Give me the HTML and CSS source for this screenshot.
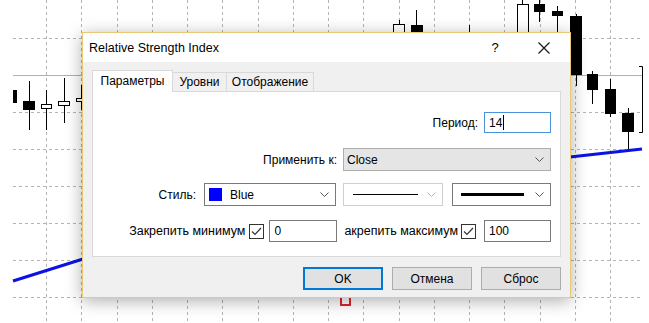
FILE: index.html
```html
<!DOCTYPE html>
<html lang="ru">
<head>
    <meta charset="UTF-8">
    <title>Relative Strength Index</title>
    <link rel="stylesheet" href="styles.css">
</head>
<body>
<div class="screen">
    <svg class="chart" width="649" height="323" viewBox="0 0 649 323">
        <g class="grid">
            <line x1="46.5" y1="0" x2="46.5" y2="323"/>
            <line x1="81.5" y1="0" x2="81.5" y2="323"/>
            <line x1="117.5" y1="0" x2="117.5" y2="323"/>
            <line x1="152.5" y1="0" x2="152.5" y2="323"/>
            <line x1="187.5" y1="0" x2="187.5" y2="323"/>
            <line x1="222.5" y1="0" x2="222.5" y2="323"/>
            <line x1="258.5" y1="0" x2="258.5" y2="323"/>
            <line x1="293.5" y1="0" x2="293.5" y2="323"/>
            <line x1="328.5" y1="0" x2="328.5" y2="323"/>
            <line x1="363.5" y1="0" x2="363.5" y2="323"/>
            <line x1="399.5" y1="0" x2="399.5" y2="323"/>
            <line x1="434.5" y1="0" x2="434.5" y2="323"/>
            <line x1="469.5" y1="0" x2="469.5" y2="323"/>
            <line x1="504.5" y1="0" x2="504.5" y2="323"/>
            <line x1="540.5" y1="0" x2="540.5" y2="323"/>
            <line x1="575.5" y1="0" x2="575.5" y2="323"/>
            <line x1="610.5" y1="0" x2="610.5" y2="323"/>
            <line x1="13" y1="38.5" x2="642" y2="38.5"/>
            <line x1="13" y1="112.5" x2="642" y2="112.5"/>
            <line x1="13" y1="149.5" x2="642" y2="149.5"/>
            <line x1="13" y1="186.5" x2="642" y2="186.5"/>
            <line x1="13" y1="223.5" x2="642" y2="223.5"/>
            <line x1="13" y1="260.5" x2="642" y2="260.5"/>
            <line x1="13" y1="297.5" x2="642" y2="297.5"/>
        </g>
        <line class="level" x1="13" y1="75.5" x2="642" y2="75.5"/>
        <path class="bracket" d="M639 66.5H642.5V132.5H639"/>

        <!-- свечи -->
        <g class="candles">
            <rect class="bear" x="13.5" y="90.5" width="3" height="12"/>
            <line x1="29.5" y1="81" x2="29.5" y2="130"/>
            <rect class="bear" x="23.5" y="101.5" width="11" height="8"/>
            <line x1="46.5" y1="90" x2="46.5" y2="130"/>
            <rect class="bull" x="41.5" y="104.5" width="10" height="4"/>
            <line x1="64.5" y1="78" x2="64.5" y2="123"/>
            <rect class="bull" x="58.5" y="101.5" width="11" height="4"/>
            <line x1="81.5" y1="85" x2="81.5" y2="110"/>
            <rect class="bull" x="76.5" y="98.5" width="11" height="3"/>

            <line x1="399.5" y1="20" x2="399.5" y2="24"/>
            <rect class="bull" x="393.5" y="24.5" width="11" height="12"/>
            <line x1="416.5" y1="10" x2="416.5" y2="26"/>
            <rect class="bear" x="411.5" y="25.5" width="11" height="10"/>
            <line x1="469.5" y1="25" x2="469.5" y2="34"/>
            <line x1="522.5" y1="0" x2="522.5" y2="5"/>
            <rect class="bull" x="517.5" y="4.5" width="11" height="30"/>
            <line x1="539.5" y1="0" x2="539.5" y2="22"/>
            <rect class="bear" x="534.5" y="4.5" width="10" height="7"/>
            <line x1="557.5" y1="6" x2="557.5" y2="34"/>
            <rect class="bear" x="552.5" y="11.5" width="10" height="4"/>
            <line x1="576.5" y1="14" x2="576.5" y2="86"/>
            <rect class="bear" x="570.5" y="16.5" width="11" height="58"/>
            <line x1="592.5" y1="71" x2="592.5" y2="104"/>
            <rect class="bear" x="587.5" y="74.5" width="10" height="15"/>
            <line x1="610.5" y1="79" x2="610.5" y2="117"/>
            <rect class="bear" x="605.5" y="89.5" width="10" height="24"/>
            <line x1="628.5" y1="108" x2="628.5" y2="151"/>
            <rect class="bear" x="622.5" y="113.5" width="11" height="18"/>
        </g>

        <polyline class="rsi" points="13,281 83,259 330,200 570,157 642,149"/>
        <rect class="marker" x="341" y="293" width="9" height="12"/>
    </svg>

    <div class="dialog">
        <div class="titlebar">
            <span class="title">Relative Strength Index</span>
            <span class="help">?</span>
            <svg class="close" width="12" height="12" viewBox="0 0 12 12">
                <path d="M0.5 0.5L11.5 11.5M11.5 0.5L0.5 11.5"/>
            </svg>
        </div>

        <div class="dialog-body">
            <div class="tabs">
                <div class="tab active">Параметры</div>
                <div class="tab tab-levels">Уровни</div>
                <div class="tab tab-view">Отображение</div>
            </div>

            <div class="panel">
                <div class="row row-period">
                    <span class="label">Период:</span>
                    <div class="field field-period focused">14<span class="caret"></span></div>
                </div>

                <div class="row row-apply">
                    <span class="label">Применить к:</span>
                    <div class="select select-apply">
                        <span class="value">Close</span>
                        <svg class="chevron" width="9" height="5" viewBox="0 0 9 5"><path d="M0.5 0.5L4.5 4.5L8.5 0.5"/></svg>
                    </div>
                </div>

                <div class="row row-style">
                    <span class="label">Стиль:</span>
                    <div class="select select-color">
                        <span class="swatch"></span>
                        <span class="value">Blue</span>
                        <svg class="chevron" width="9" height="5" viewBox="0 0 9 5"><path d="M0.5 0.5L4.5 4.5L8.5 0.5"/></svg>
                    </div>
                    <div class="select select-line light">
                        <span class="line-thin"></span>
                        <svg class="chevron" width="9" height="5" viewBox="0 0 9 5"><path d="M0.5 0.5L4.5 4.5L8.5 0.5"/></svg>
                    </div>
                    <div class="select select-width">
                        <span class="line-thick"></span>
                        <svg class="chevron" width="9" height="5" viewBox="0 0 9 5"><path d="M0.5 0.5L4.5 4.5L8.5 0.5"/></svg>
                    </div>
                </div>

                <div class="row row-fix">
                    <span class="label">Закрепить минимум</span>
                    <svg class="check check-min" width="15" height="15" viewBox="0 0 15 15">
                        <rect x="0.5" y="0.5" width="14" height="14"/>
                        <path d="M3 7.5L6 10.5L12 4"/>
                    </svg>
                    <div class="field field-min">0</div>
                    <span class="label label-max">акрепить максимум</span>
                    <svg class="check check-max" width="15" height="15" viewBox="0 0 15 15">
                        <rect x="0.5" y="0.5" width="14" height="14"/>
                        <path d="M3 7.5L6 10.5L12 4"/>
                    </svg>
                    <div class="field field-max">100</div>
                </div>
            </div>

            <div class="buttons">
                <button class="btn default">OK</button>
                <button class="btn">Отмена</button>
                <button class="btn">Сброс</button>
            </div>
        </div>
    </div>
</div>
</body>
</html>
```

FILE: styles.css
```css
body {
    margin: 0;
    background-color: #fff;
    font-family: 'Liberation Sans', Arial, sans-serif;
    font-size: 12px;
    color: #000;
}

.screen {
    position: relative;
    width: 649px;
    height: 323px;
    overflow: hidden;
    background-color: #fff;
}

.chart {
    position: absolute;
    left: 0;
    top: 0;
}

.grid line {
    stroke: #b4b4b4;
    stroke-width: 1;
    stroke-dasharray: 3 3;
}

.level {
    stroke: #b0b0b0;
    stroke-width: 1;
}

.bracket {
    fill: none;
    stroke: #000;
    stroke-width: 1;
}

.candles line {
    stroke: #000;
    stroke-width: 1;
}

.candles rect {
    stroke: #000;
    stroke-width: 1;
}

.bear {
    fill: #000;
}

.bull {
    fill: #fff;
}

.rsi {
    fill: none;
    stroke: #0a12e6;
    stroke-width: 3;
}

.marker {
    fill: #fff;
    stroke: #e0262b;
    stroke-width: 2;
}

/* окно диалога */
.dialog {
    position: absolute;
    left: 82px;
    top: 32px;
    width: 489px;
    height: 266px;
    box-sizing: border-box;
    border: 1px solid #e9c976;
    background-color: #f0f0f0;
    box-shadow: 0 3px 16px rgba(0, 0, 0, 0.32);
    display: flex;
    flex-direction: column;
}

.titlebar {
    height: 29px;
    background-color: #fff;
    display: flex;
    align-items: center;
    padding-left: 6px;
}

.title {
    font-size: 12.5px;
    flex: 1;
}

.help {
    width: 12px;
    text-align: center;
    font-size: 13px;
    margin-right: 37px;
}

.close {
    margin-right: 20px;
}

.close path {
    stroke: #111;
    stroke-width: 1.1;
    fill: none;
}

.dialog-body {
    flex: 1;
    padding: 8px 9px 0 9px;
}

.tabs {
    display: flex;
    align-items: flex-end;
    height: 21px;
}

.tab {
    box-sizing: border-box;
    height: 19px;
    border: 1px solid #d9d9d9;
    border-bottom: none;
    border-left: none;
    background-color: #f0f0f0;
    text-align: center;
    line-height: 18px;
}

.tab.active {
    position: relative;
    z-index: 1;
    width: 81px;
    height: 22px;
    margin-bottom: -1px;
    border-left: 1px solid #d9d9d9;
    background-color: #fff;
    line-height: 20px;
}

.tab-levels {
    width: 54px;
}

.tab-view {
    width: 87px;
}

.panel {
    box-sizing: border-box;
    height: 166px;
    border: 1px solid #d9d9d9;
    background-color: #fff;
    padding: 20px 9px 0 0;
}

.row {
    display: flex;
    justify-content: flex-end;
    align-items: center;
}

.row-apply {
    margin-top: 15px;
}

.row-style {
    margin-top: 12px;
}

.row-fix {
    margin-top: 14px;
}

.row-fix .label {
    font-size: 12.5px;
}

.field {
    box-sizing: border-box;
    height: 22px;
    border: 1px solid #7a7a7a;
    background-color: #fff;
    padding-left: 4px;
    line-height: 20px;
    display: flex;
    align-items: center;
}

.field.focused {
    border-color: #4a92dc;
}

.field-period {
    width: 67px;
    height: 21px;
    margin-left: 6px;
}

.caret {
    display: inline-block;
    width: 1px;
    height: 15px;
    margin-left: 1px;
    background-color: #000;
}

.field-min {
    width: 68px;
    margin-left: 5px;
}

.field-max {
    width: 67px;
    margin-left: 8px;
}

.select {
    box-sizing: border-box;
    height: 23px;
    border: 1px solid #7a7a7a;
    background-color: #fff;
    display: flex;
    align-items: center;
    padding: 0 6px 0 3px;
}

.select .value {
    flex: 1;
}

.chevron path {
    fill: none;
    stroke: #555;
    stroke-width: 1;
}

.select-apply {
    width: 208px;
    margin-left: 6px;
    border-color: #adadad;
    background-color: #e5e5e5;
}

.select-color {
    width: 132px;
    margin-left: 8px;
    padding-left: 4px;
}

.swatch {
    width: 13px;
    height: 13px;
    background-color: #0000ff;
    margin-right: 8px;
}

.select-line {
    width: 100px;
    margin-left: 7px;
    padding-left: 9px;
}

.select.light {
    border-color: #cfcfcf;
}

.select.light .chevron path {
    stroke: #b4b4b4;
}

.line-thin {
    width: 65px;
    height: 1px;
    background-color: #000;
    margin-right: auto;
}

.select-width {
    width: 99px;
    margin-left: 9px;
    padding-left: 8px;
}

.line-thick {
    width: 63px;
    height: 3px;
    background-color: #000;
    margin-right: auto;
}

.check {
    margin-left: 4px;
}

.check rect {
    fill: #fff;
    stroke: #333;
    stroke-width: 1;
}

.check path {
    fill: none;
    stroke: #333;
    stroke-width: 1.2;
}

.check-max {
    margin-left: 3px;
}

.label-max {
    margin-left: 7px;
}

.buttons {
    display: flex;
    justify-content: flex-end;
    gap: 9px;
    margin-top: 10px;
}

.btn {
    box-sizing: border-box;
    width: 80px;
    height: 23px;
    border: 1px solid #adadad;
    background-color: #e1e1e1;
    font-family: 'Liberation Sans', Arial, sans-serif;
    font-size: 12px;
    color: #000;
    padding: 0;
}

.btn.default {
    border: 2px solid #0078d7;
}
```
